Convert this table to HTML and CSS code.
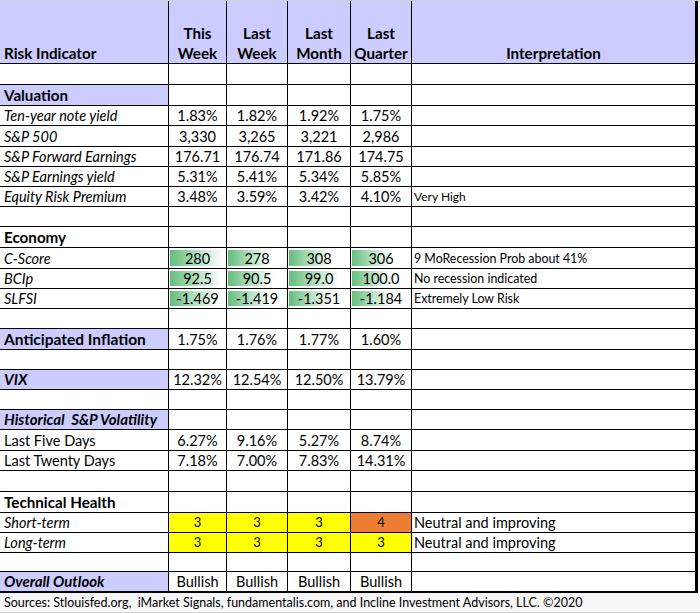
FILE: index.html
```html
<!DOCTYPE html>
<html>
<head>
<meta charset="utf-8">
<link rel="stylesheet" href="styles.css">
</head>
<body>
<div class="page">
  <div class="sheet">
    <div class="c hd lav left">Risk Indicator</div>
    <div class="c hd lav">This<br>Week</div>
    <div class="c hd lav">Last<br>Week</div>
    <div class="c hd lav">Last<br>Month</div>
    <div class="c hd lav">Last<br>Quarter</div>
    <div class="c hd lav">Interpretation</div>

    <div class="c"></div><div class="c"></div><div class="c"></div><div class="c"></div><div class="c"></div><div class="c"></div>

    <div class="c lav left sec">Valuation</div><div class="c"></div><div class="c"></div><div class="c"></div><div class="c"></div><div class="c"></div>

    <div class="c left it">Ten-year note yield</div><div class="c n">1.83%</div><div class="c n">1.82%</div><div class="c n">1.92%</div><div class="c n">1.75%</div><div class="c"></div>
    <div class="c left it">S&amp;P 500</div><div class="c n">3,330</div><div class="c n">3,265</div><div class="c n">3,221</div><div class="c n">2,986</div><div class="c"></div>
    <div class="c left it">S&amp;P Forward Earnings</div><div class="c n">176.71</div><div class="c n">176.74</div><div class="c n">171.86</div><div class="c n">174.75</div><div class="c"></div>
    <div class="c left it">S&amp;P Earnings yield</div><div class="c n">5.31%</div><div class="c n">5.41%</div><div class="c n">5.34%</div><div class="c n">5.85%</div><div class="c"></div>
    <div class="c left it">Equity Risk Premium</div><div class="c n">3.48%</div><div class="c n">3.59%</div><div class="c n">3.42%</div><div class="c n">4.10%</div><div class="c interp xs">Very High</div>

    <div class="c"></div><div class="c"></div><div class="c"></div><div class="c"></div><div class="c"></div><div class="c"></div>

    <div class="c left sec">Economy</div><div class="c"></div><div class="c"></div><div class="c"></div><div class="c"></div><div class="c"></div>

    <div class="c left it">C-Score</div><div class="c n bar" style="--w:92%">280</div><div class="c n bar" style="--w:70%">278</div><div class="c n bar" style="--w:68%">308</div><div class="c n bar" style="--w:64%">306</div><div class="c interp sm">9 MoRecession Prob about 41%</div>
    <div class="c left it">BCIp</div><div class="c n bar" style="--w:90%">92.5</div><div class="c n bar" style="--w:76%">90.5</div><div class="c n bar" style="--w:80%">99.0</div><div class="c n bar" style="--w:64%">100.0</div><div class="c interp sm">No recession indicated</div>
    <div class="c left it">SLFSI</div><div class="c n bar" style="--w:84%">-1.469</div><div class="c n bar" style="--w:70%">-1.419</div><div class="c n bar" style="--w:66%">-1.351</div><div class="c n bar" style="--w:64%">-1.184</div><div class="c interp sm">Extremely Low Risk</div>

    <div class="c"></div><div class="c"></div><div class="c"></div><div class="c"></div><div class="c"></div><div class="c"></div>

    <div class="c lav left big">Anticipated Inflation</div><div class="c n">1.75%</div><div class="c n">1.76%</div><div class="c n">1.77%</div><div class="c n">1.60%</div><div class="c"></div>

    <div class="c"></div><div class="c"></div><div class="c"></div><div class="c"></div><div class="c"></div><div class="c"></div>

    <div class="c lav left bi">VIX</div><div class="c n">12.32%</div><div class="c n">12.54%</div><div class="c n">12.50%</div><div class="c n">13.79%</div><div class="c"></div>

    <div class="c"></div><div class="c"></div><div class="c"></div><div class="c"></div><div class="c"></div><div class="c"></div>

    <div class="c lav left bi">Historical&nbsp; S&amp;P Volatility</div><div class="c"></div><div class="c"></div><div class="c"></div><div class="c"></div><div class="c"></div>

    <div class="c left">Last Five Days</div><div class="c n">6.27%</div><div class="c n">9.16%</div><div class="c n">5.27%</div><div class="c n">8.74%</div><div class="c"></div>
    <div class="c left">Last Twenty Days</div><div class="c n">7.18%</div><div class="c n">7.00%</div><div class="c n">7.83%</div><div class="c n">14.31%</div><div class="c"></div>

    <div class="c"></div><div class="c"></div><div class="c"></div><div class="c"></div><div class="c"></div><div class="c"></div>

    <div class="c left sec">Technical Health</div><div class="c"></div><div class="c"></div><div class="c"></div><div class="c"></div><div class="c"></div>

    <div class="c left it">Short-term</div><div class="c n yel sml">3</div><div class="c n yel sml">3</div><div class="c n yel sml">3</div><div class="c n org sml">4</div><div class="c interp">Neutral and improving</div>
    <div class="c left it">Long-term</div><div class="c n yel sml">3</div><div class="c n yel sml">3</div><div class="c n yel sml">3</div><div class="c n yel sml">3</div><div class="c interp">Neutral and improving</div>

    <div class="c"></div><div class="c"></div><div class="c"></div><div class="c"></div><div class="c"></div><div class="c"></div>

    <div class="c lav left bi">Overall Outlook</div><div class="c n">Bullish</div><div class="c n">Bullish</div><div class="c n">Bullish</div><div class="c n">Bullish</div><div class="c"></div>
  </div>
  <div class="footer">Sources: Stlouisfed.org,&nbsp; iMarket Signals, fundamentalis.com, and Incline Investment Advisors, LLC. ©2020</div>
</div>
</body>
</html>
```

FILE: styles.css
```css
html, body {
  margin: 0;
  padding: 0;
  background: #ffffff;
}

.page {
  width: 700px;
  height: 613px;
  box-sizing: border-box;
  border-top: 1px solid #d4d4d4;
  border-bottom: 1px solid #d4d4d4;
  background: #f7f7f7;
  font-family: Lato, "Open Sans", sans-serif;
  color: #000;
}

.sheet {
  display: grid;
  width: 695px;
  grid-template-columns: 168px 57px 60px 62px 60px 283px;
  grid-template-rows:
    62px
    20px 20px 19px 20px 19px 19px 19px 19px
    20px 20px 19px 19px 19px 20px 19px 19px
    19px 19px 20px 19px 20px 20px 19px 19px
    18px 19px;
  gap: 1px;
  background: #000;
  border-right: 3px solid #000;
  border-bottom: 2px solid #000;
}

.c {
  background: #fff;
  display: flex;
  align-items: flex-end;
  justify-content: center;
  font-size: 14.5px;
  line-height: 17px;
  padding-bottom: 1px;
  white-space: nowrap;
  overflow: hidden;
}

.lav {
  background: #ccccff;
}

.hd {
  font-weight: 700;
  font-size: 15.2px;
  line-height: 20px;
  text-align: center;
  padding-bottom: 0;
}

.left {
  justify-content: flex-start;
  padding-left: 4px;
  text-align: left;
}

.interp {
  justify-content: flex-start;
  padding-left: 2px;
}

.it {
  font-style: italic;
}

.sec {
  font-weight: 700;
  font-size: 15.2px;
}

.big {
  font-weight: 700;
  font-size: 15.5px;
}

.bi {
  font-weight: 700;
  font-style: italic;
  font-size: 15px;
}

.sm {
  font-size: 12.4px;
}

.xs {
  font-size: 12px;
}

.sml {
  font-size: 13px;
}

.yel {
  background: #ffff00;
}

.org {
  background: #ed7d31;
}

.bar {
  background:
    linear-gradient(to right, #63be7b, #ffffff) 1px 2px / var(--w) calc(100% - 4px) no-repeat,
    #fff;
}

.footer {
  height: 19px;
  padding-left: 4px;
  font-size: 12.5px;
  line-height: 19px;
  white-space: nowrap;
}
```
